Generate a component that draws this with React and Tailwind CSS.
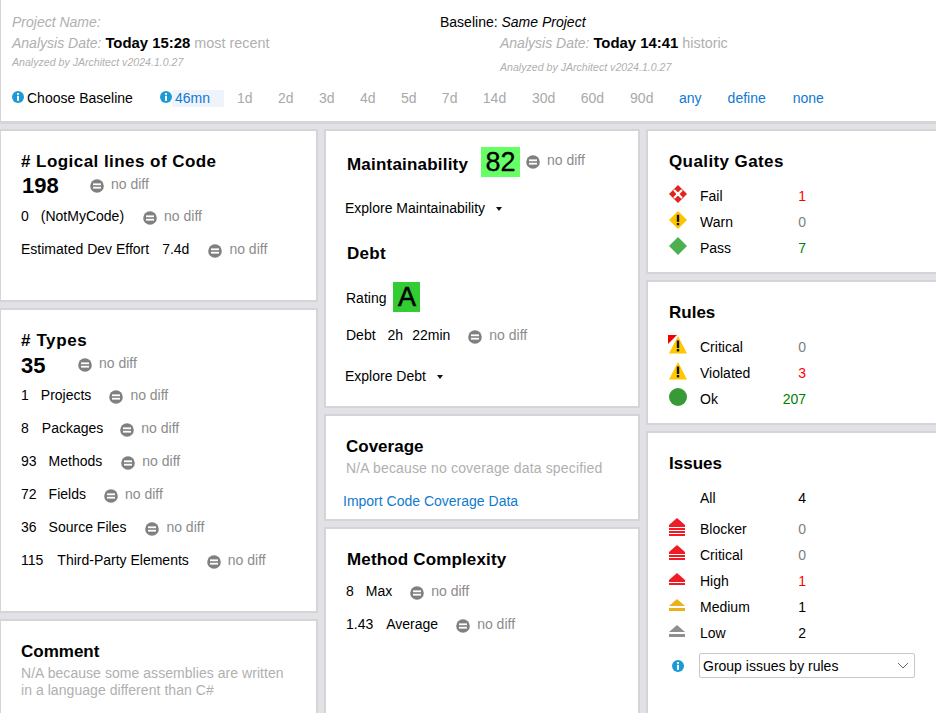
const NoDiff = ({ className = "" }) => (
  <span className={"inline-flex items-center " + className}>
    <svg width="14" height="14" viewBox="0 0 14 14" className="mt-[4px]">
      <circle cx="7" cy="7" r="6.8" fill="#808080" />
      <rect x="3" y="4.4" width="8" height="1.8" fill="#fff" />
      <rect x="3" y="7.8" width="8" height="1.8" fill="#fff" />
    </svg>
    <span className="ml-[7px] text-[#8c8c8c]">no diff</span>
  </span>
);

const Info = ({ className = "" }) => (
  <svg width="12" height="12" viewBox="0 0 12 12" className={className}>
    <circle cx="6" cy="6" r="6" fill="#1c9ad6" />
    <rect x="5" y="2" width="2" height="1.8" fill="#fff" />
    <rect x="5" y="4.8" width="2" height="5" fill="#fff" />
  </svg>
);

const Panel = ({ className = "", children }) => (
  <section className={"bg-white border-2 border-[#d4d4d9] shrink-0 " + className}>{children}</section>
);

const Title = ({ children, className = "" }) => (
  <h2 className={"text-[17px] leading-[20px] font-bold text-black " + className}>{children}</h2>
);

const Caret = () => (
  <svg width="6" height="4" viewBox="0 0 6 4" className="ml-[11px] mt-[1px]"><path d="M0 0h6L3 4z" fill="#111" /></svg>
);

const Fail = () => (
  <svg width="20" height="20" viewBox="0 0 20 20">
    <path d="M10 1l9 9-9 9-9-9z" fill="#e2231a" />
    <path d="M6 6l8 8M14 6l-8 8" stroke="#fff" strokeWidth="2.2" />
    <path d="M10 7.8l2.2 2.2-2.2 2.2L7.8 10z" fill="#fff" />
  </svg>
);
const Warn = () => (
  <svg width="20" height="20" viewBox="0 0 20 20">
    <path d="M10 1l9 9-9 9-9-9z" fill="#ffc400" />
    <rect x="8.8" y="4.8" width="2.4" height="7" fill="#111" />
    <rect x="8.8" y="13" width="2.4" height="2.2" fill="#111" />
  </svg>
);
const Pass = () => (
  <svg width="20" height="20" viewBox="0 0 20 20"><path d="M10 1l9 9-9 9-9-9z" fill="#4caf50" /></svg>
);
const Tri = ({ corner }) => (
  <svg width="20" height="20" viewBox="0 0 20 20">
    <path d="M10 1L19 18.5H1z" fill="#ffc800" />
    <rect x="8.8" y="5.5" width="2.4" height="7.5" fill="#111" />
    <rect x="8.8" y="14" width="2.4" height="2.4" fill="#111" />
    {corner && <path d="M0 0h9L0 9z" fill="#f00000" />}
  </svg>
);
const Ok = () => (
  <svg width="20" height="20" viewBox="0 0 20 20"><circle cx="10" cy="10" r="9" fill="#379a37" /></svg>
);
const Sev = ({ color, bars, fused = true }) => {
  const h = 7 + bars * 3 + (fused ? 0 : 2);
  return (
    <svg width="16" height={h} viewBox={`0 0 16 ${h}`} className="ml-[1px]">
      <path d="M8 0L16 7H0z" fill={color} />
      {Array.from({ length: bars }).map((_, i) => (
        <rect key={i} x="0" y={fused ? 7 + i * 3 : 9} width="16" height={fused ? 2 : 3} fill={color} />
      ))}
    </svg>
  );
};

const StatRow = ({ icon, label, value, color }) => (
  <div className="flex items-center h-[26px]">
    <span className="w-[32px] -ml-[1px] flex items-center -mt-[4px]">{icon}</span>
    <span className="w-[80px] text-black">{label}</span>
    <span className={"w-[26px] text-right " + color}>{value}</span>
  </div>
);

const days = [
  ["1d", "mr-[25.4px]"], ["2d", "mr-[25.4px]"], ["3d", "mr-[25.4px]"], ["4d", "mr-[25.4px]"], ["5d", "mr-[25.4px]"], ["7d", "mr-[25.4px]"],
  ["14d", "mr-[25.8px]"], ["30d", "mr-[25.4px]"], ["60d", "mr-[26px]"], ["90d", "mr-[25.6px]"],
];
const grayNum = "text-[#808080]";
const greenNum = "text-[#008000]";
const redNum = "text-[#f00]";

export default function App() {
  return (
    <div className="w-[936px] h-[713px] overflow-hidden bg-[#e1e1e6] text-[14px] leading-[16px] text-black" style={{ fontFamily: '"Liberation Sans", Arial, sans-serif' }}>
      <header className="h-[124px] bg-white border-l border-b-[3px] border-[#d4d4d9] pl-[11px] pt-[12px]">
        <div className="flex h-[20px] items-center">
          <span className="w-[428px] italic text-[#b0b0b0]">Project Name:</span>
          <span>Baseline: <span className="italic">Same Project</span></span>
        </div>
        <div className="flex h-[22px] items-center">
          <span className="w-[488px]"><span className="italic text-[#b0b0b0]">Analysis Date:</span> <b className="text-[14.9px]">Today 15:28</b> <span className="text-[#b0b0b0] text-[14.4px]">most recent</span></span>
          <span><span className="italic text-[#b0b0b0]">Analysis Date:</span> <b className="text-[14.9px]">Today 14:41</b> <span className="text-[#b0b0b0] text-[14.4px]">historic</span></span>
        </div>
        <div className="flex text-[10.6px] italic text-[#b0b0b0] leading-[12px]">
          <span className="w-[488px] mt-[2px]">Analyzed by JArchitect v2024.1.0.27</span>
          <span className="mt-[7px]">Analyzed by JArchitect v2024.1.0.27</span>
        </div>
        <div className="flex items-center mt-[16px] h-[18px]">
          <Info className="-mt-[2px]" />
          <span className="ml-[3px] w-[133px]">Choose Baseline</span>
          <Info className="-mt-[2px]" />
          <span className="w-[52px] h-[17px] pl-[3px] flex items-center bg-[#eff3fb] text-[#0f7ad0]">46mn</span>
          <span className="flex ml-[13px]">
            {days.map(([d, m]) => (
              <span key={d} className={"text-[#a9a9a9] " + m}>{d}</span>
            ))}
            <span className="mr-[26px] text-[#0f7ad0]">any</span>
            <span className="mr-[27px] text-[#0f7ad0]">define</span>
            <span className="text-[#0f7ad0]">none</span>
          </span>
        </div>
      </header>

      <div className="flex gap-[6px] pt-[5px]">
        <div className="w-[318px] flex flex-col gap-[6px]">
          <Panel className="h-[173px] border-l-[1px] pl-[20px] pt-[21px]">
            <Title className="tracking-[0.45px]"># Logical lines of Code</Title>
            <div className="flex items-center h-[24px]">
              <span className="text-[22px] font-bold w-[68px] ml-[1px] mt-[3px]">198</span>
              <NoDiff />
            </div>
            <div className="flex items-center h-[33px] mt-[3px]">
              <span>0</span><span className="ml-[12px] mr-[19px]">(NotMyCode)</span><NoDiff />
            </div>
            <div className="flex items-center h-[33px]">
              <span>Estimated Dev Effort</span><span className="ml-[13px] mr-[19px]">7.4d</span><NoDiff />
            </div>
          </Panel>
          <Panel className="h-[305px] border-l-[1px] pl-[20px] pt-[21px]">
            <Title className="tracking-[0.6px]"># Types</Title>
            <div className="flex items-start h-[23px]">
              <span className="text-[22px] font-bold w-[57px] mt-[3px] leading-[24px]">35</span>
              <NoDiff className="mt-[3px]" />
            </div>
            <div className="mt-[4px]">
              {[
                ["1", "Projects", "ml-[12px] mr-[18px]"],
                ["8", "Packages", "ml-[13px] mr-[17px]"],
                ["93", "Methods", "ml-[12px] mr-[19px]"],
                ["72", "Fields", "ml-[12px] mr-[18px]"],
                ["36", "Source Files", "ml-[12px] mr-[19px]"],
                ["115", "Third-Party Elements", "ml-[14px] mr-[18px]"],
              ].map(([n, l, m]) => (
                <div key={l} className="flex items-center h-[33px]">
                  <span>{n}</span><span className={m}>{l}</span><NoDiff />
                </div>
              ))}
            </div>
          </Panel>
          <Panel className="h-[140px] border-l-[1px] pl-[20px] pt-[21px]">
            <Title>Comment</Title>
            <p className="text-[#b0b0b0] leading-[17px] mt-[3px] tracking-[0.05px]">N/A because some assemblies are written<br />in a language different than C#</p>
          </Panel>
        </div>

        <div className="w-[316px] flex flex-col gap-[6px]">
          <Panel className="h-[279px] pl-[20px] pt-[16px]">
            <div className="flex items-start h-[30px]">
              <Title className="w-[135px] mt-[8px] tracking-[0.2px] pl-[1px]">Maintainability</Title>
              <span className="w-[39px] h-[30px] bg-[#66ff66] text-[27px] leading-[31px] text-center [-webkit-text-stroke:0.3px_black]">82</span>
              <NoDiff className="ml-[6px] mt-[4px]" />
            </div>
            <div className="flex items-center h-[20px] mt-[21px] -ml-[1px]">Explore Maintainability<Caret /></div>
            <Title className="mt-[26px] tracking-[0.3px] pl-[1px]">Debt</Title>
            <div className="flex items-center h-[30px] mt-[18px]">
              <span className="mt-[2px]">Rating</span>
              <span className="ml-[7px] w-[27px] h-[30px] bg-[#33cc33] text-[27px] leading-[31px] text-center [-webkit-text-stroke:0.6px_black]">A</span>
            </div>
            <div className="flex items-center h-[33px] mt-[6px]">
              <span>Debt</span><span className="ml-[12px]">2h</span><span className="ml-[9px] mr-[18px]">22min</span><NoDiff />
            </div>
            <div className="flex items-center h-[20px] mt-[15px] -ml-[1px]">Explore Debt<Caret /></div>
          </Panel>
          <Panel className="h-[107px] pl-[20px] pt-[21px]">
            <Title>Coverage</Title>
            <p className="text-[#b0b0b0] mt-[3px] tracking-[0.15px]">N/A because no coverage data specified</p>
            <a className="block text-[#0f7ad0] mt-[17px] -ml-[3px]">Import Code Coverage Data</a>
          </Panel>
          <Panel className="h-[200px] pl-[20px] pt-[21px]">
            <Title className="tracking-[0.15px] pl-[1px]">Method Complexity</Title>
            <div className="flex items-center h-[33px] mt-[4px]">
              <span>8</span><span className="ml-[12px] mr-[18px]">Max</span><NoDiff />
            </div>
            <div className="flex items-center h-[33px]">
              <span>1.43</span><span className="ml-[13px] mr-[18px]">Average</span><NoDiff />
            </div>
          </Panel>
        </div>

        <div className="flex-1 flex flex-col gap-[6px]">
          <Panel className="h-[145px] border-r-0 pl-[21px] pt-[21px]">
            <Title className="mb-[11px] tracking-[0.4px]">Quality Gates</Title>
            <StatRow icon={<Fail />} label="Fail" value="1" color={redNum} />
            <StatRow icon={<Warn />} label="Warn" value="0" color={grayNum} />
            <StatRow icon={<Pass />} label="Pass" value="7" color={greenNum} />
          </Panel>
          <Panel className="h-[145px] border-r-0 pl-[21px] pt-[21px]">
            <Title className="mb-[11px]">Rules</Title>
            <StatRow icon={<Tri corner />} label="Critical" value="0" color={grayNum} />
            <StatRow icon={<Tri />} label="Violated" value="3" color={redNum} />
            <StatRow icon={<Ok />} label="Ok" value="207" color={greenNum} />
          </Panel>
          <Panel className="h-[285px] border-r-0 pl-[21px] pt-[21px]">
            <Title className="mb-[11px]">Issues</Title>
            <div className="flex items-center h-[26px] pl-[31px] mb-[5px]">
              <span className="w-[80px]">All</span><span className="w-[26px] text-right">4</span>
            </div>
            <StatRow icon={<Sev color="#ee1c25" bars={4} />} label="Blocker" value="0" color={grayNum} />
            <StatRow icon={<Sev color="#ee1c25" bars={3} />} label="Critical" value="0" color={grayNum} />
            <StatRow icon={<Sev color="#ee1c25" bars={2} />} label="High" value="1" color={redNum} />
            <StatRow icon={<Sev color="#ecb01c" bars={1} fused={false} />} label="Medium" value="1" color="text-black" />
            <StatRow icon={<Sev color="#8f8f8f" bars={1} fused={false} />} label="Low" value="2" color="text-black" />
            <div className="flex items-center mt-[7px]">
              <span className="w-[30px] pl-[3px] flex"><Info /></span>
              <div className="w-[216px] h-[25px] border border-[#c8c8c8] rounded-[2px] flex items-center justify-between pl-[3px] pr-[4px]">
                <span>Group issues by rules</span>
                <svg width="12" height="7" viewBox="0 0 12 7" className="mr-[1px]"><path d="M1 1l5 5 5-5" fill="none" stroke="#666" strokeWidth="1" /></svg>
              </div>
            </div>
          </Panel>
        </div>
      </div>
    </div>
  );
}
